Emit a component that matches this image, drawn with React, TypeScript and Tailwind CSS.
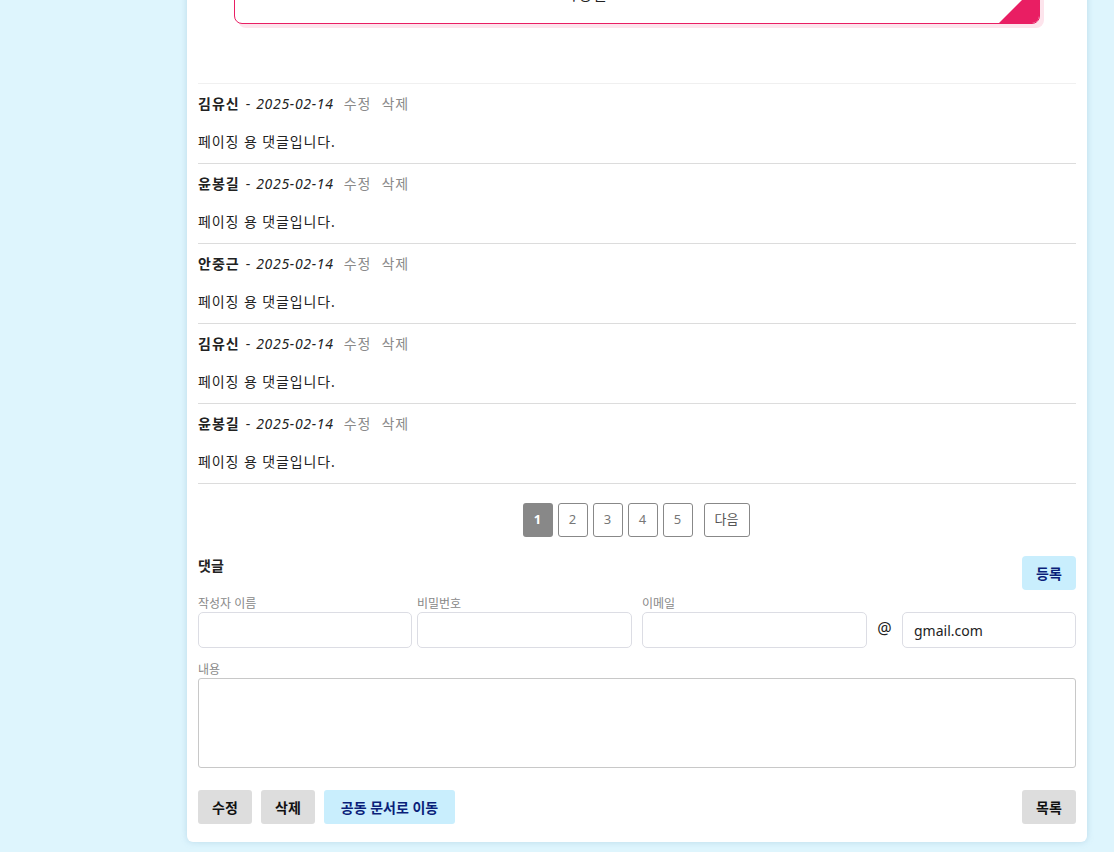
import React from "react";

const comments = ["김유신", "윤봉길", "안중근", "김유신", "윤봉길"];

export default function App() {
  const font = { fontFamily: '"Noto Sans", "Noto Sans CJK KR", sans-serif' };
  return (
    <div className="min-h-screen bg-[#def5fd] pl-[187px] text-[14px] text-[#222]" style={font}>
      <div className="w-[900px] bg-white rounded-b-[6px] shadow-[0_0_6px_rgba(120,170,200,0.35)] px-[11px] pb-[18px]">
        {/* top pink card (cut off by scroll) */}
        <div className="mx-[36px] -mt-[60px] relative">
          <div className="relative h-[84px] border border-[#e91e63] rounded-[8px] bg-white overflow-hidden shadow-[4px_4px_0_0_#fde4ec] flex items-end justify-center pb-[19px]">
            <span className="text-[15px] leading-[20px] text-[#222] tracking-[1px]">작성일 : 2025-02-14</span>
            <svg className="absolute right-0 bottom-0" width="40" height="40" viewBox="0 0 40 40">
              <polygon points="0,40 40,0 40,40" fill="#e91e63" />
            </svg>
            <svg className="absolute left-0 top-0" width="40" height="40" viewBox="0 0 40 40">
              <polygon points="0,0 40,0 0,40" fill="#e91e63" />
            </svg>
          </div>
        </div>

        <div className="mt-[59px] border-t border-[#f0f0f0]">
          {comments.map((n, i) => (
            <div key={i} className="border-b border-[#dcdcdc] pt-[9px] pb-[10px]">
              <div className="h-[22px] leading-[22px] flex items-center">
                <span className="font-bold tracking-[1px]">{n}</span>
                <span className="mx-[6px]">-</span>
                <span className="italic tracking-[0.7px]">2025-02-14</span>
                <span className="ml-[10px] text-[#8a8a8a] tracking-[1px]">수정</span>
                <span className="ml-[10px] text-[#8a8a8a] tracking-[1px]">삭제</span>
              </div>
              <div className="mt-[16px] h-[22px] leading-[22px] tracking-[0.9px]">페이징 용 댓글입니다.</div>
            </div>
          ))}
        </div>

        <div className="mt-[19px] flex justify-center items-center pr-[2px]">
          <div className="flex gap-[5px]">
            <button className="w-[30px] h-[34px] rounded-[3px] bg-[#888] text-white font-bold text-[13px]">1</button>
            {[2, 3, 4, 5].map((p) => (
              <button key={p} className="w-[30px] h-[34px] rounded-[3px] border border-[#888] text-[#777] text-[13px] bg-white">
                {p}
              </button>
            ))}
          </div>
          <button className="ml-[11px] w-[46px] h-[34px] rounded-[3px] border border-[#888] text-[#555] text-[13px] bg-white">다음</button>
        </div>

        <div className="mt-[19px] flex justify-between items-start">
          <div className="font-bold leading-[20px]">댓글</div>
          <button className="w-[54px] h-[34px] rounded-[4px] bg-[#c9eefd] text-[#0a1f7a] font-bold text-[14px]">등록</button>
        </div>

        <div className="mt-[6px] flex items-end">
          <div className="w-[214px]">
            <div className="text-[12px] leading-[16px] text-[#888]">작성자 이름</div>
            <input className="w-full h-[36px] border border-[#dcdde4] rounded-[5px] outline-none" />
          </div>
          <div className="w-[215px] ml-[5px]">
            <div className="text-[12px] leading-[16px] text-[#888]">비밀번호</div>
            <input className="w-full h-[36px] border border-[#dcdde4] rounded-[5px] outline-none" />
          </div>
          <div className="w-[225px] ml-[10px]">
            <div className="text-[12px] leading-[16px] text-[#888]">이메일</div>
            <input className="w-full h-[36px] border border-[#dcdde4] rounded-[5px] outline-none" />
          </div>
          <div className="w-[35px] h-[36px] flex items-center justify-center text-[16px] pb-[4px]">@</div>
          <div className="w-[174px]">
            <input
              defaultValue="gmail.com"
              className="w-full h-[36px] border border-[#dcdde4] rounded-[5px] px-[11px] text-[14px] text-[#222] outline-none"
            />
          </div>
        </div>

        <div className="mt-[14px]">
          <div className="text-[12px] leading-[16px] text-[#888]">내용</div>
          <textarea className="block w-full h-[90px] border border-[#c8c8c8] rounded-[3px] resize-none outline-none" />
        </div>

        <div className="mt-[22px] flex items-center">
          <button className="w-[54px] h-[34px] rounded-[3px] bg-[#dddddd] font-bold text-[#111]">수정</button>
          <button className="ml-[9px] w-[54px] h-[34px] rounded-[3px] bg-[#dddddd] font-bold text-[#111]">삭제</button>
          <button className="ml-[9px] w-[131px] h-[34px] rounded-[3px] bg-[#c9eefd] font-bold text-[#0a1f7a]">공동 문서로 이동</button>
          <div className="flex-1" />
          <button className="w-[54px] h-[34px] rounded-[3px] bg-[#dddddd] font-bold text-[#111]">목록</button>
        </div>
      </div>
      <div className="h-[10px]" />
    </div>
  );
}
